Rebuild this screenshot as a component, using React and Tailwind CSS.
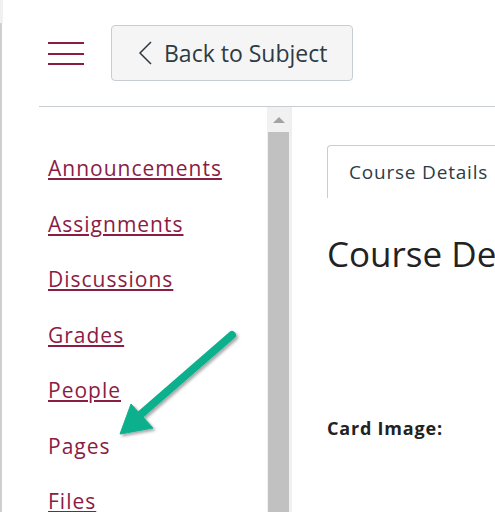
import React from 'react';

const NAV = [
  { label: 'Announcements', link: true },
  { label: 'Assignments', link: true },
  { label: 'Discussions', link: true },
  { label: 'Grades', link: true },
  { label: 'People', link: true },
  { label: 'Pages', link: false },
  { label: 'Files', link: true },
];

function Hamburger() {
  return (
    <div className="flex flex-col gap-[8.5px] w-[36px]">
      <span className="block h-[2px] bg-[#8b1c43]" />
      <span className="block h-[2px] bg-[#8b1c43]" />
      <span className="block h-[2px] bg-[#8b1c43]" />
    </div>
  );
}

function Arrow() {
  return (
    <svg
      className="absolute left-[100px] top-[320px]"
      width="150"
      height="130"
      viewBox="100 320 150 130"
    >
      <defs>
        <filter id="sh" x="-20%" y="-20%" width="140%" height="140%">
          <feDropShadow dx="2" dy="2" stdDeviation="1.6" floodColor="#000" floodOpacity="0.35" />
        </filter>
      </defs>
      <g filter="url(#sh)" fill="#0bb08d" stroke="#0bb08d">
        <line x1="232" y1="335" x2="140" y2="415" strokeWidth="8" strokeLinecap="round" />
        <polygon points="120,434 131,404 153,428" strokeWidth="1" strokeLinejoin="round" />
      </g>
    </svg>
  );
}

export default function App() {
  return (
    <div
      className="relative w-[495px] h-[512px] overflow-hidden bg-white flex"
      style={{ fontFamily: '"Open Sans", "Noto Sans", sans-serif' }}
    >
      {/* left window edge */}
      <div className="w-[3px] flex flex-col shrink-0">
        <div className="h-[23px] bg-[#f1f1f1]" />
        <div className="flex-1 w-[2px] bg-[#cfcfcf]" />
      </div>

      <div className="flex-1 flex flex-col min-w-0">
        {/* header */}
        <div className="h-[106px] shrink-0 flex items-start pl-[45px] pt-[25px] gap-[27px]">
          <div className="pt-[17px]">
            <Hamburger />
          </div>
          <button className="h-[56px] w-[242px] rounded-[4px] border border-[#c7cdd1] bg-[#f5f5f5] flex items-center gap-[12px] pl-[26px] text-[#2d3b45] text-[23px]">
            <svg width="14" height="24" viewBox="0 0 14 24" fill="none" stroke="#2d3b45" strokeWidth="1.5">
              <path d="M13 1 L2 12 L13 23" />
            </svg>
            <span>Back to Subject</span>
          </button>
        </div>

        <div className="ml-[36px] border-t border-[#c7cdd1] flex-1 flex min-h-0">
          {/* course nav */}
          <nav className="w-[228px] shrink-0 pl-[9px] pt-[34px] flex flex-col">
            {NAV.map((item) => (
              <div key={item.label} className="h-[55.5px] shrink-0 flex items-center">
                <a
                  href="#"
                  className={
                    'text-[21px] leading-none tracking-[1px] text-[#8b1c43] ' +
                    (item.link ? 'underline decoration-2 underline-offset-[2px]' : 'no-underline')
                  }
                >
                  {item.label}
                </a>
              </div>
            ))}
          </nav>

          {/* scrollbar */}
          <div className="w-[23px] shrink-0 bg-[#f1f1f1] flex flex-col items-center">
            <div className="h-[25px] w-full flex items-center justify-center">
              <div className="w-0 h-0 border-l-[6px] border-r-[6px] border-b-[6px] border-l-transparent border-r-transparent border-b-[#a3a3a3]" />
            </div>
            <div className="flex-1 w-[21px] bg-[#c1c1c1]" />
          </div>

          {/* content */}
          <main className="flex-1 min-w-0 border-l-2 border-[#efefef] pl-[35px] pt-[38px]">
            <div className="h-[53px] w-[200px] border-l border-t border-[#c7cdd1] rounded-tl-[4px] flex items-center pl-[21px] text-[19px] tracking-[0.8px] text-[#2d3b45] whitespace-nowrap">
              Course Details
            </div>
            <h1 className="mt-[38px] text-[35px] leading-none text-[#222] whitespace-nowrap">
              Course Details
            </h1>
            <div className="mt-[144px] text-[18px] font-bold tracking-[0.8px] text-[#222] whitespace-nowrap">
              Card Image:
            </div>
          </main>
        </div>
      </div>

      <Arrow />
    </div>
  );
}
